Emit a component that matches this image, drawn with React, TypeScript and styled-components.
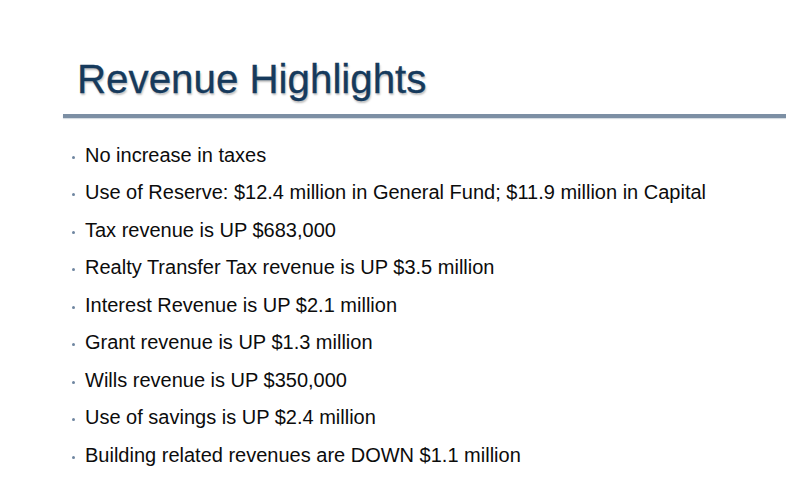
import React from "react";
import styled, { createGlobalStyle } from "styled-components";

const GlobalStyle = createGlobalStyle`
  html, body {
    margin: 0;
    padding: 0;
    background: #ffffff;
  }
  body {
    font-family: "Liberation Sans", Arial, sans-serif;
  }
`;

const items = [
  "No increase in taxes",
  "Use of Reserve: $12.4 million in General Fund; $11.9 million in Capital",
  "Tax revenue is UP $683,000",
  "Realty Transfer Tax revenue is UP $3.5 million",
  "Interest Revenue is UP $2.1 million",
  "Grant revenue is UP $1.3 million",
  "Wills revenue is UP $350,000",
  "Use of savings is UP $2.4 million",
  "Building related revenues are DOWN $1.1 million",
];

export default function App() {
  return (
    <>
      <GlobalStyle />
      <Slide>
        <Title>Revenue Highlights</Title>
        <Rule />
        <BulletList>
          {items.map((text) => (
            <Bullet key={text}>
              <Dot />
              <span>{text}</span>
            </Bullet>
          ))}
        </BulletList>
      </Slide>
    </>
  );
}

const Slide = styled.div`
  width: 786px;
  height: 481px;
  overflow: hidden;
  background: #ffffff;
  padding-top: 56px;
  box-sizing: border-box;
`;

const Title = styled.h1`
  margin: 0 0 10px 0;
  padding-left: 77px;
  font-family: "Liberation Sans", Arial, sans-serif;
  font-weight: normal;
  font-size: 40.3px;
  line-height: 48px;
  color: #163a5c;
  -webkit-text-stroke: 0.3px #163a5c;
  text-shadow: 1px 2px 2px rgba(0, 0, 0, 0.25);
`;

const Rule = styled.div`
  margin-left: 63px;
  height: 4px;
  background: #7c8fa4;
  box-shadow: 0 1px 1px rgba(124, 143, 164, 0.35);
`;

const BulletList = styled.ul`
  list-style: none;
  margin: 19px 0 0 0;
  padding: 0 0 0 72px;
`;

const Bullet = styled.li`
  display: flex;
  align-items: flex-start;
  font-size: 20px;
  line-height: 37.45px;
  color: #0c0c0c;
  white-space: nowrap;
`;

const Dot = styled.i`
  flex: none;
  width: 3px;
  height: 3px;
  margin: 19px 10px 0 0;
  border-radius: 50%;
  background: #6f86a0;
`;
